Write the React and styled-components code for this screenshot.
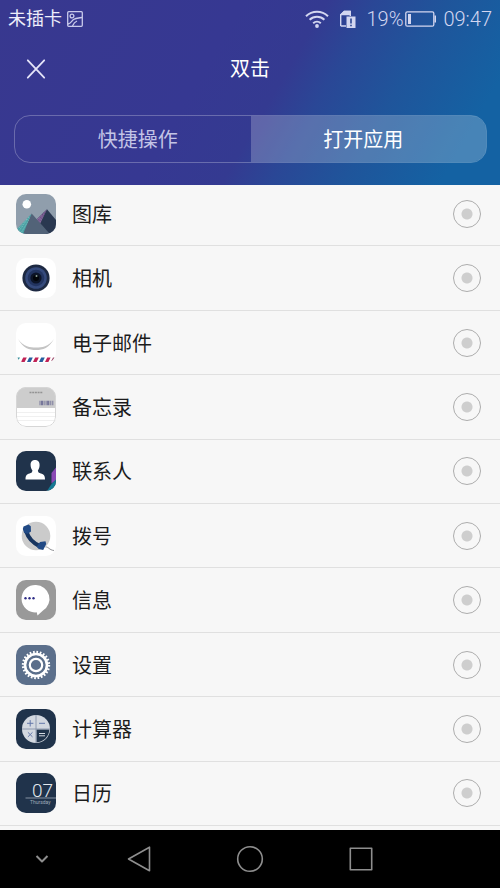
import React, { useState } from "react";
import styled, { createGlobalStyle } from "styled-components";

const GlobalStyle = createGlobalStyle`
  * {
    box-sizing: border-box;
  }
  body {
    margin: 0;
    background: #f7f7f7;
    font-family: Roboto, "Noto Sans CJK SC", sans-serif;
  }
`;

const StyledRoot = styled.div`
  min-height: 100vh;
  display: flex;
  flex-direction: column;
`;

const Header = styled.header`
  position: relative;
  z-index: 1;
  padding-bottom: 22px;
  color: #fff;
  background: linear-gradient(
    120deg,
    #38388f 0%,
    #363892 40%,
    #343a91 54%,
    #2a4796 62%,
    #1f559b 74%,
    #1462a3 90%
  );
`;

const StatusBar = styled.div`
  height: 37px;
  padding: 0 8px;
  display: flex;
  align-items: center;
  justify-content: space-between;
  color: #d3d6f0;
`;

const StatusGroup = styled.div`
  display: flex;
  align-items: center;
  gap: ${(props) => props.$gap};
`;

const Carrier = styled.span`
  font-size: 18px;
  line-height: 24px;
  color: #eeeefa;
`;

const StatusText = styled.span`
  font-size: 20px;
  line-height: 24px;
  font-weight: 300;
`;

const TitleBar = styled.div`
  height: 63px;
  padding: 0 16px;
  display: grid;
  grid-template-columns: 40px 1fr 40px;
  align-items: center;
`;

const IconButton = styled.button`
  height: 40px;
  padding: 0;
  border: 0;
  background: transparent;
  display: flex;
  align-items: center;
  justify-content: center;
  cursor: pointer;
`;

const Title = styled.h1`
  margin: 0;
  font-size: 20px;
  line-height: 28px;
  font-weight: 400;
  text-align: center;
`;

const Tabs = styled.div`
  height: 48px;
  margin: 15px 13px 0 14px;
  display: flex;
  overflow: hidden;
  border: 1px solid rgba(255, 255, 255, 0.26);
  border-radius: 16px;
`;

const Tab = styled.button`
  flex: 1;
  padding: 2px 0 0;
  border: 0;
  font-family: inherit;
  font-size: 20px;
  line-height: 28px;
  color: ${(props) => (props.$active ? "#fff" : "#c3c4e6")};
  background: ${(props) =>
    props.$active ? "rgba(255, 255, 255, 0.22)" : "transparent"};
  cursor: pointer;

  &:first-child {
    padding-left: 10px;
  }
  &:last-child {
    padding-right: 10px;
  }
`;

/* first row sits slightly scrolled under the header */
const List = styled.main`
  flex: 1;
  margin-top: -3px;
  padding-bottom: 4px;
  display: flex;
  flex-direction: column;
  background: #f7f7f7;
`;

const Row = styled.label`
  flex: 1 0 64px;
  padding: 0 19px 0 16px;
  display: flex;
  align-items: center;
  gap: 16px;
  border-bottom: 1px solid #e0e0e0;
  cursor: pointer;
`;

const AppIcon = styled.svg`
  width: 40px;
  height: 40px;
  flex: none;
  border-radius: 10px;
  background: ${(props) => props.$bg};
`;

const RowName = styled.span`
  flex: 1;
  padding-top: 2px;
  font-size: 20px;
  line-height: 28px;
  color: #1c1c1c;
`;

const Radio = styled.input`
  appearance: none;
  width: 28px;
  height: 28px;
  margin: 0;
  border: 1px solid #adadad;
  border-radius: 50%;
  background: radial-gradient(
    circle,
    ${(props) => (props.checked ? "#1462a3" : "#cecece")} 5px,
    transparent 6px
  );
`;

const NavBar = styled.nav`
  height: 58px;
  display: grid;
  grid-template-columns: 84px repeat(3, 1fr) 84px;
  align-items: center;
  background: #000;
`;

const Gallery = () => (
  <AppIcon viewBox="0 0 40 40" $bg="#909eac">
    <circle cx="10.8" cy="10.3" r="4.3" fill="#fff" />
    <path d="M31 15.3 19 27l9 13h12V26z" fill="#2a3850" />
    <path d="M31 15.3 19 27l4 5z" fill="#8a6a9f" />
    <path d="M28 18.5 21 28M29.5 17.5 22 30" stroke="#4b3867" strokeWidth=".8" strokeDasharray="1 1" />
    <path d="M15.7 19.5 1 35l2 5h6z" fill="#4aa3a6" />
    <path d="M13 23 3 37M14 24 5 39M11 25 2 35" stroke="#8bc4c4" strokeWidth=".8" strokeDasharray="1.2 1" />
    <path d="M15.7 19.5 7 40h24l2-1z" fill="#526378" />
  </AppIcon>
);

const Camera = () => (
  <AppIcon viewBox="0 0 40 40" $bg="#fff">
    <circle cx="20" cy="20" r="13.6" fill="#1d2942" />
    <circle cx="20" cy="20" r="10.8" fill="#354a7c" />
    <circle cx="20" cy="20" r="8.3" fill="#223460" />
    <circle cx="20" cy="20" r="5.6" fill="#0c1427" />
    <circle cx="20" cy="20" r="3" fill="#020509" />
    <circle cx="20.5" cy="18" r="1" fill="#8fa59c" />
  </AppIcon>
);

const Mail = () => (
  <AppIcon viewBox="0 0 40 40" $bg="#fff">
    <path d="M2 16c6 8 12 8.500 18 8.500S32 24 38 16c-5 9-11 11-18 11S7 25 2 16z" fill="#c4c4c4" />
    <path d="M1.5 34.5H4L2 38z" fill="#3a8f9c" />
    <path d="M7.2 34.5h3.6L8.6 39H5zM19.2 34.5h3.6L20.6 39H17zM31.2 34.5h3.4L32.4 39H29z" fill="#c02255" />
    <path d="M13.2 34.5h3.6L14.6 39H11zM25.2 34.5h3.6L26.6 39H23z" fill="#265f9f" />
    <path d="M37 34.5h1.5l-2 3.5h-1.300z" fill="#a05070" />
  </AppIcon>
);

const Memo = () => (
  <AppIcon viewBox="0 0 40 40" $bg="#fff">
    <path d="M0 0h40v21H0z" fill="#cdcdcd" />
    <path d="M13.5 5.5h13" stroke="#939393" strokeWidth="1.3" strokeDasharray="2 .7" />
    <path d="M23.5 16h14" stroke="#77779a" strokeWidth="4.5" strokeDasharray="1 .5 2 .6 1 1" />
    <path d="M0 25.5h40M0 29.5h40M0 33.5h40" stroke="#f0f0f0" />
    <rect x=".5" y=".5" width="39" height="39" rx="9.5" fill="none" stroke="#d6d6d6" />
  </AppIcon>
);

const Contacts = () => (
  <AppIcon viewBox="0 0 40 40" $bg="#20334b">
    <path d="M40 16.5 35.5 22v10.5L40 29z" fill="#8b49b5" />
    <path d="M40 28.5 35.5 33 31 40h9z" fill="#157a94" />
    <path
      d="M19 9c3.2 0 4.7 2.2 4.6 5.2-.1 2.5-.8 4-1.7 5 .1 1.7.5 2.3 1.8 2.9 3.2 1.3 5.3 1.5 5.3 6.5H9.5c0-5 2-5.2 5.2-6.5 1.3-.6 1.6-1.2 1.7-2.9-.9-1-1.7-2.5-1.8-5C14.5 11.2 15.8 9 19 9z"
      fill="#fff"
    />
  </AppIcon>
);

const Dialer = () => (
  <AppIcon viewBox="0 0 40 40" $bg="#fff">
    <circle cx="20" cy="20" r="14.3" fill="#cbcbcb" />
    <path d="M10.500 16c1.500 5 6 10.500 13 14" fill="none" stroke="#18355f" strokeWidth="4.200" />
    <path d="m7.5 10.5 5-2 2.3 1.8.2 5.2-3.2 2.3-3.6-.7-1.400-4z" fill="#214a85" />
    <path d="m24 26 5.5-.8.7 2.8-3 6-4.5-1-2-2.200z" fill="#214a85" />
    <path d="M29.5 31c3-.5 3.5 3 8.5 3.5" fill="none" stroke="#73757b" strokeWidth=".8" />
  </AppIcon>
);

const Messages = () => (
  <AppIcon viewBox="0 0 40 40" $bg="#999">
    <path d="M20 5a13.8 13.8 0 0 1 7 25.5L21.5 35.5l-.8-3.2A13.7 13.7 0 1 1 20 5z" fill="#fff" />
    <circle cx="9.5" cy="18.3" r="1.2" fill="#2e2c86" />
    <circle cx="13.5" cy="18.3" r="1.2" fill="#2e2c86" />
    <circle cx="17.5" cy="18.3" r="1.2" fill="#2e2c86" />
  </AppIcon>
);

const Settings = () => (
  <AppIcon viewBox="0 0 40 40" $bg="#5b6f8b">
    <circle cx="20" cy="20" r="13" fill="none" stroke="#fff" strokeWidth="2.4" strokeDasharray="1.702 1.702" />
    <circle cx="20" cy="20" r="11" fill="none" stroke="#fff" strokeWidth="2.6" />
    <circle cx="20" cy="20" r="6.2" fill="none" stroke="#fff" strokeWidth="2.2" />
  </AppIcon>
);

const Calculator = () => (
  <AppIcon viewBox="0 0 40 40" $bg="#20334b">
    <circle cx="20" cy="20" r="14" fill="#d3d8e0" />
    <path d="M20.5 20.5h12.8A13 13 0 0 1 20.5 33.2z" fill="#20334b" />
    <path d="M20 6v28M6 20h28" stroke="#7f8ca3" strokeWidth=".8" />
    <path d="M11 14.3h6.4M14.2 11.1v6.4M23 14.3h6M11.9 23.3l4.6 4.6M16.5 23.3l-4.6 4.6" stroke="#6578aa" />
    <path d="M23 24.5h6M23 26.8h6" stroke="#d3d8e0" />
  </AppIcon>
);

const Calendar = () => (
  <AppIcon viewBox="0 0 40 40" $bg="#20334b">
    <text x="16" y="24" fontSize="19" fontWeight="300" fontFamily="Roboto, sans-serif" fill="#e3e8ee">
      07
    </text>
    <path d="M9.5 25H40" stroke="#9eabb9" strokeWidth=".8" />
    <text x="14" y="31" fontSize="5" fontFamily="Roboto, sans-serif" fill="#9eabb9">
      Thursday
    </text>
  </AppIcon>
);

const apps = [
  { name: "图库", Icon: Gallery },
  { name: "相机", Icon: Camera },
  { name: "电子邮件", Icon: Mail },
  { name: "备忘录", Icon: Memo },
  { name: "联系人", Icon: Contacts },
  { name: "拨号", Icon: Dialer },
  { name: "信息", Icon: Messages },
  { name: "设置", Icon: Settings },
  { name: "计算器", Icon: Calculator },
  { name: "日历", Icon: Calendar },
];

function Status() {
  return (
    <StatusBar>
      <StatusGroup $gap="5px">
        <Carrier>未插卡</Carrier>
        <svg width="16" height="16" viewBox="0 0 16 16" fill="none" stroke="#c9caeb" strokeWidth="1.3">
          <rect x=".7" y=".7" width="14.6" height="14.6" rx="1" />
          <circle cx="5" cy="5" r="1.9" />
          <path d="M1 13c3-.5 3.5-3 5.5-4.5S11 7 15 6.5M5.500 15c1-2.500 2-4 4.500-5" />
        </svg>
      </StatusGroup>
      <StatusGroup $gap="10px">
        <svg width="24" height="18" viewBox="0 0 24 18" fill="none" stroke="#d3d6f0" strokeWidth="2">
          <path d="M1 6.2c6.2-6 15.8-6 22 0M4.6 9.8c4.2-4 10.6-4 14.8 0M8.2 13.3c2.2-2 5.4-2 7.6 0" />
          <circle cx="12" cy="16" r="1.9" fill="#d3d6f0" stroke="none" />
        </svg>
        <svg width="17" height="18" viewBox="0 0 17 18">
          <path d="M1.7 16V5l3.6-3.6h6V6M1.7 16H7" fill="none" stroke="#d3d6f0" strokeWidth="1.4" />
          <path d="M1 4.5 5 .7h6.5v4.5H1zM7.5 6.5h9V18h-9z" fill="#d3d6f0" />
          <path d="M12 8.5v5M12 14.7v1.6" stroke="#2b4591" strokeWidth="1.6" />
        </svg>
        <StatusGroup $gap="6px">
          <StatusGroup $gap="2px">
            <StatusText>19%</StatusText>
            <svg width="32" height="16" viewBox="0 0 32 16">
              <rect x=".8" y=".8" width="28" height="14.4" rx="1.5" fill="none" stroke="#d3d6f0" strokeWidth="1.3" />
              <path d="M3 3h3v10H3zM29.5 4.5H31v7h-1.500z" fill="#d3d6f0" />
            </svg>
          </StatusGroup>
          <StatusText>09:47</StatusText>
        </StatusGroup>
      </StatusGroup>
    </StatusBar>
  );
}

function Navigation() {
  const line = { fill: "none", stroke: "#8e8e8e", strokeWidth: 1.6, strokeLinejoin: "round" };
  return (
    <NavBar>
      <IconButton aria-label="隐藏">
        <svg width="14" height="10" viewBox="0 0 14 10" {...line} strokeWidth="2">
          <path d="m1.5 2 5.5 5.5L12.5 2" />
        </svg>
      </IconButton>
      <IconButton aria-label="返回">
        <svg width="24" height="26" viewBox="0 0 24 26" {...line}>
          <path d="M22.5 1.2v23.6L1.5 13z" />
        </svg>
      </IconButton>
      <IconButton aria-label="主页">
        <svg width="28" height="28" viewBox="0 0 28 28" {...line}>
          <circle cx="14" cy="14" r="12.3" />
        </svg>
      </IconButton>
      <IconButton aria-label="最近">
        <svg width="24" height="24" viewBox="0 0 24 24" {...line}>
          <rect x="1.3" y="1.3" width="21.4" height="21.4" />
        </svg>
      </IconButton>
    </NavBar>
  );
}

function App() {
  const [tab, setTab] = useState("打开应用");
  const [selected, setSelected] = useState(null);
  return (
    <>
      <GlobalStyle />
      <StyledRoot>
        <Header>
          <Status />
          <TitleBar>
            <IconButton aria-label="关闭">
              <svg width="20" height="20" viewBox="0 0 20 20" stroke="#e4e4f8" strokeWidth="1.8" strokeLinecap="round">
                <path d="m1.8 1.3 16.4 17.4M18.2 1.3 1.8 18.7" />
              </svg>
            </IconButton>
            <Title>双击</Title>
          </TitleBar>
          <Tabs>
            {["快捷操作", "打开应用"].map((name) => (
              <Tab key={name} $active={tab === name} onClick={() => setTab(name)}>
                {name}
              </Tab>
            ))}
          </Tabs>
        </Header>
        <List>
          {apps.map(({ name, Icon }) => (
            <Row key={name}>
              <Icon />
              <RowName>{name}</RowName>
              <Radio
                type="radio"
                name="app"
                checked={selected === name}
                onChange={() => setSelected(name)}
              />
            </Row>
          ))}
        </List>
        <Navigation />
      </StyledRoot>
    </>
  );
}

export default App;
